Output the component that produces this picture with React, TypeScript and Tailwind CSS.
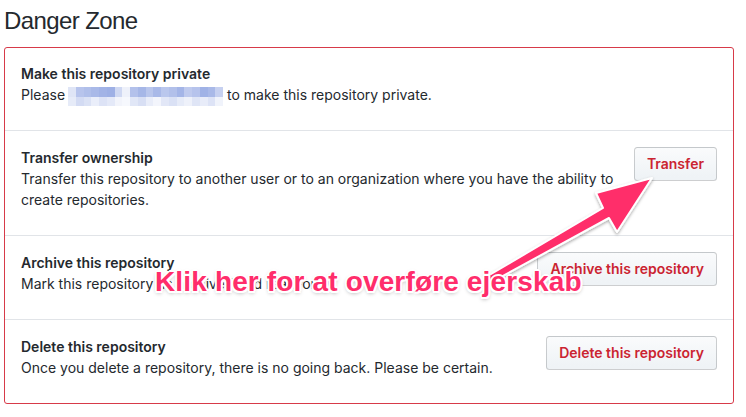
import React from "react";

const SANS = "font-['Liberation_Sans',Arial,sans-serif]";
const BODY = "font-['Inter','Liberation_Sans',sans-serif]";

// pixelated blur over the hidden link in the first row
const BLUR_TOP = [
  "#dfe5f6", "#b7c4ec", "#b0bfea", "#a9b9e8", "#a2b3e6", "#9eb0e5", "#cfd8f2", "#eef1fa",
  "#b3c1eb", "#a6b7e7", "#b9c6ec", "#a9b9e8", "#bac7ed", "#b2c0ea", "#a4b5e7", "#bfcaee",
  "#b6c3ec", "#a0b2e6", "#a9b9e8", "#c6d0f0",
];
const BLUR_BOTTOM = [
  "#e6ebf8", "#d3dbf3", "#dbe2f5", "#eaeefa", "#dde3f6", "#e4e9f8", "#f2f4fb", "#f6f8fd",
  "#e1e7f7", "#d8dff4", "#e9edf9", "#f3f5fc", "#e2e7f7", "#dae1f5", "#e6ebf8", "#eef1fa",
  "#dfe5f6", "#e8ecf9", "#dde3f6", "#f0f3fb",
];

const Blurred = () => (
  <span className="inline-flex flex-col align-top translate-y-[3px] ml-[3px] mr-[4px] w-[155px] h-[19px]">
    <span className="flex h-[10px]">
      {BLUR_TOP.map((c, i) => (
        <span key={i} className="flex-1" style={{ background: c }} />
      ))}
    </span>
    <span className="flex h-[9px]">
      {BLUR_BOTTOM.map((c, i) => (
        <span key={i} className="flex-1" style={{ background: c }} />
      ))}
    </span>
  </span>
);

const DangerButton = ({ label }: { label: string }) => (
  <button className="shrink-0 ml-4 px-3 py-[6px] text-[14px] leading-5 font-semibold text-[#cb2431] border border-[rgba(27,31,35,0.2)] rounded-[3.5px] bg-[linear-gradient(-180deg,#fafbfc_0%,#eff3f6_90%)] whitespace-nowrap">
    {label}
  </button>
);

const rows = [
  { title: "Transfer ownership", desc: "Transfer this repository to another user or to an organization where you have the ability to create repositories.", button: "Transfer" },
  { title: "Archive this repository", desc: "Mark this repository as archived and read-only.", button: "Archive this repository" },
  { title: "Delete this repository", desc: "Once you delete a repository, there is no going back. Please be certain.", button: "Delete this repository" },
];

export default function App() {
  return (
    <div className={`relative w-[746px] h-[417px] overflow-hidden bg-white text-[#24292e] px-[4px] ${BODY}`}>
      <h2 className={`pt-[6px] text-[24px] leading-[30px] font-normal tracking-[-0.6px] mb-[11px] ${SANS}`}>Danger Zone</h2>

      <div className="w-[730px] border border-[#d73a49] rounded-[3px]">
        {/* private */}
        <div className="px-4 pt-[15px] pb-[15px] border-b border-[#e1e4e8]">
          <h4 className="text-[14px] leading-[21px] font-semibold">Make this repository private</h4>
          <p className="text-[14px] leading-[21px] mb-[10px]">
            Please<Blurred />to make this repository private.
          </p>
        </div>

        {rows.map((r, i) => (
          <div
            key={r.title}
            className={`flex items-start justify-between px-4 pt-4 pb-[15px] ${i < rows.length - 1 ? "border-b border-[#e1e4e8]" : ""}`}
          >
            <div className="flex-1">
              <h4 className="text-[14px] leading-[21px] font-semibold">{r.title}</h4>
              <p className="text-[14px] leading-[21px] mb-[10px]">{r.desc}</p>
            </div>
            <DangerButton label={r.button} />
          </div>
        ))}
      </div>

      {/* annotation */}
      <svg className="absolute inset-0 pointer-events-none" width="746" height="417" viewBox="0 0 746 417">
        <defs>
          <filter id="shadow" x="-10%" y="-10%" width="120%" height="130%">
            <feDropShadow dx="0" dy="1.5" stdDeviation="1.5" floodColor="#000" floodOpacity="0.35" />
          </filter>
        </defs>
        <path
          d="M486 277 L603 208 L596 193 L652 178 L617 232 L609 218 L490 283 Z"
          fill="#ff2d6b"
          stroke="#fff"
          strokeWidth="2"
          strokeLinejoin="round"
          filter="url(#shadow)"
        />
      </svg>
      <div className={`absolute left-[155px] top-[268px] text-[28px] leading-[28px] font-bold tracking-[0.15px] text-[#ff2d6b] whitespace-nowrap ${SANS} [text-shadow:2px_0_0_#fff,-2px_0_0_#fff,0_2px_0_#fff,0_-2px_0_#fff,1.5px_1.5px_0_#fff,-1.5px_-1.5px_0_#fff,1.5px_-1.5px_0_#fff,-1.5px_1.5px_0_#fff,0_2px_4px_rgba(0,0,0,0.4)]`}>
        Klik her for at overføre ejerskab
      </div>
    </div>
  );
}
